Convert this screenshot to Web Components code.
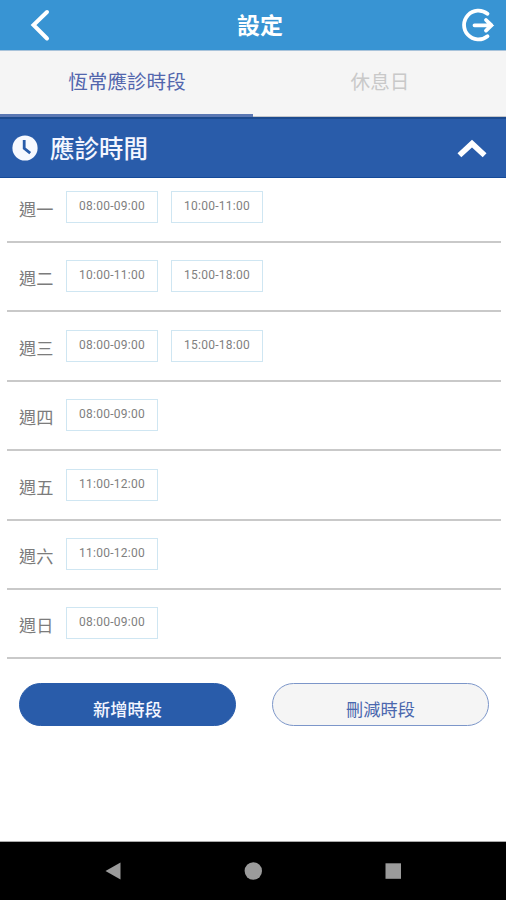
<!DOCTYPE html>
<html lang="zh-Hant">
<head>
<meta charset="utf-8">
<title>設定</title>
<style>
    body {
        margin: 0;
        width: 506px;
        height: 900px;
        overflow: hidden;
        display: flex;
        flex-direction: column;
        background: #fff;
        font-family: Roboto, "Noto Sans CJK TC", sans-serif;
    }
    main { flex: 1; }
    .actions {
        display: flex;
        justify-content: space-between;
        padding: 24px 17px 0 19px;
    }
</style>
</head>
<body>
<app-header>設定</app-header>
<tab-bar>
    <tab-item active>恆常應診時段</tab-item>
    <tab-item>休息日</tab-item>
</tab-bar>
<main>
    <section-header>應診時間</section-header>
    <day-list>
        <day-row day="週一"><time-slot>08:00-09:00</time-slot><time-slot>10:00-11:00</time-slot></day-row>
        <day-row day="週二"><time-slot>10:00-11:00</time-slot><time-slot>15:00-18:00</time-slot></day-row>
        <day-row day="週三"><time-slot>08:00-09:00</time-slot><time-slot>15:00-18:00</time-slot></day-row>
        <day-row day="週四"><time-slot>08:00-09:00</time-slot></day-row>
        <day-row day="週五"><time-slot>11:00-12:00</time-slot></day-row>
        <day-row day="週六"><time-slot>11:00-12:00</time-slot></day-row>
        <day-row day="週日"><time-slot>08:00-09:00</time-slot></day-row>
    </day-list>
    <div class="actions">
        <pill-button primary>新增時段</pill-button>
        <pill-button>刪減時段</pill-button>
    </div>
</main>
<system-nav></system-nav>

<script>
class AppHeader extends HTMLElement {
    constructor() {
        super();
        const shadowRoot = this.attachShadow({mode: 'open'});
        shadowRoot.innerHTML = `
            <style>
                :host {
                    display: grid;
                    grid-template-columns: 60px 1fr 46px;
                    height: 50px;
                    background: #3894d3;
                    color: #fff;
                }
                svg { display: block; fill: none; stroke: #fff; }
                h1 {
                    margin: 0;
                    padding-top: 4px;
                    text-align: center;
                    font-size: 23px;
                    line-height: 46px;
                    font-weight: 700;
                }
            </style>
            <svg width="60" height="50" stroke-width="4" stroke-linecap="round" stroke-linejoin="miter">
                <path d="M47 12 L33.5 25 L47 38.5"/>
            </svg>
            <h1><slot></slot></h1>
            <svg width="46" height="50" stroke-width="3.8" stroke-linecap="round" stroke-linejoin="miter">
                <path d="M27.5 13.8 A14.4 14.4 0 1 0 27.5 36.2"/>
                <path d="M14.5 25.3 H31.5 M26 20 L31.5 25.3 L26 30.6"/>
            </svg>`;
    }
}
customElements.define('app-header', AppHeader);

class TabBar extends HTMLElement {
    constructor() {
        super();
        const shadowRoot = this.attachShadow({mode: 'open'});
        shadowRoot.innerHTML = `
            <style>
                :host {
                    display: grid;
                    grid-template-columns: 1fr 1fr;
                    height: 67px;
                    background: #f5f5f5;
                    border-top: 1px solid #a9c3da;
                    box-sizing: border-box;
                }
            </style>
            <slot></slot>`;
    }
}
customElements.define('tab-bar', TabBar);

class TabItem extends HTMLElement {
    constructor() {
        super();
        const shadowRoot = this.attachShadow({mode: 'open'});
        shadowRoot.innerHTML = `
            <style>
                :host {
                    display: block;
                    box-sizing: border-box;
                    padding: 17px 0 0 1px;
                    text-align: center;
                    font-size: 19.6px;
                    line-height: 29px;
                    color: #c9c9c9;
                    border-bottom: 1px solid #c4c6ca;
                }
                :host([active]) {
                    color: #5266ad;
                    border-bottom: 3px solid #5b78b3;
                }
            </style>
            <slot></slot>`;
    }
}
customElements.define('tab-item', TabItem);

class SectionHeader extends HTMLElement {
    constructor() {
        super();
        const shadowRoot = this.attachShadow({mode: 'open'});
        shadowRoot.innerHTML = `
            <style>
                :host {
                    display: flex;
                    align-items: center;
                    box-sizing: border-box;
                    height: 61px;
                    padding: 0 19px 0 12px;
                    background: #295caa;
                    border-top: 2px solid #1c4b8f;
                    border-bottom: 1px solid #154a99;
                    color: #f4f6ff;
                }
                h2 {
                    flex: 1;
                    margin: 0 0 0 12px;
                    padding-top: 4px;
                    font-size: 24.5px;
                    line-height: 54px;
                    font-weight: 500;
                }
                svg { margin-bottom: 1px; }
            </style>
            <svg width="26" height="26" viewBox="0 0 26 26">
                <circle cx="13" cy="13" r="12.6" fill="#f7f9ff"/>
                <path d="M12.2 5 V13.4 L18.2 18.2" fill="none" stroke="#295caa" stroke-width="2.8"/>
            </svg>
            <h2><slot></slot></h2>
            <svg width="30" height="22" viewBox="0 0 30 22">
                <path d="M2.4 18.2 L15 6.6 L27.6 18.2" fill="none" stroke="#fff" stroke-width="5.6"/>
            </svg>`;
    }
}
customElements.define('section-header', SectionHeader);

class DayList extends HTMLElement {
    constructor() {
        super();
        const shadowRoot = this.attachShadow({mode: 'open'});
        shadowRoot.innerHTML = `
            <style>
                :host { display: block; padding: 0 5px 0 7px; }
                ::slotted(day-row:first-child) { height: 64.8px; }
            </style>
            <slot></slot>`;
    }
}
customElements.define('day-list', DayList);

class DayRow extends HTMLElement {
    constructor() {
        super();
        const shadowRoot = this.attachShadow({mode: 'open'});
        shadowRoot.innerHTML = `
            <style>
                :host {
                    display: flex;
                    align-items: flex-end;
                    box-sizing: border-box;
                    height: 69.45px;
                    padding: 0 0 18px 12px;
                    border-bottom: 2px solid #c9c9c9;
                }
                .day {
                    width: 47px;
                    font-size: 17.2px;
                    line-height: 26px;
                    color: #7c7c7c;
                }
                .slots { display: flex; gap: 13px; }
            </style>
            <span class="day"></span>
            <div class="slots"><slot></slot></div>`;
        shadowRoot.querySelector('.day').textContent = this.getAttribute('day');
    }
}
customElements.define('day-row', DayRow);

class TimeSlot extends HTMLElement {
    constructor() {
        super();
        const shadowRoot = this.attachShadow({mode: 'open'});
        shadowRoot.innerHTML = `
            <style>
                :host {
                    display: block;
                    box-sizing: border-box;
                    width: 92px;
                    height: 32px;
                    border: 1px solid #cfe6f2;
                    text-align: center;
                    font-size: 12px;
                    line-height: 29px;
                    letter-spacing: 0.25px;
                    color: #808080;
                }
            </style>
            <slot></slot>`;
    }
}
customElements.define('time-slot', TimeSlot);

class PillButton extends HTMLElement {
    constructor() {
        super();
        const shadowRoot = this.attachShadow({mode: 'open'});
        shadowRoot.innerHTML = `
            <style>
                :host {
                    display: block;
                    box-sizing: border-box;
                    width: 217px;
                    height: 43px;
                    padding-top: 6px;
                    border: 1px solid #7c96c9;
                    border-radius: 22px;
                    background: #f5f5f5;
                    color: #4a67ae;
                    text-align: center;
                    font-size: 17.2px;
                    line-height: 41px;
                }
                :host([primary]) {
                    background: #295caa;
                    border-color: #295caa;
                    color: #f4f6ff;
                    font-weight: 500;
                }
            </style>
            <slot></slot>`;
    }
}
customElements.define('pill-button', PillButton);

class SystemNav extends HTMLElement {
    constructor() {
        super();
        const shadowRoot = this.attachShadow({mode: 'open'});
        shadowRoot.innerHTML = `
            <style>
                :host {
                    display: flex;
                    align-items: center;
                    justify-content: center;
                    gap: 122px;
                    box-sizing: border-box;
                    height: 59px;
                    border-top: 1px solid #aaa;
                    background: #000;
                }
                svg { display: block; fill: #9b9b9b; }
            </style>
            <svg width="18" height="18"><path d="M1.5 9 L16.5 0.5 V17.5 Z"/></svg>
            <svg width="18" height="18"><circle cx="9.3" cy="9" r="8.7"/></svg>
            <svg width="18" height="18"><rect x="1.5" y="1.3" width="15.5" height="15.5"/></svg>`;
    }
}
customElements.define('system-nav', SystemNav);
</script>
</body>
</html>
